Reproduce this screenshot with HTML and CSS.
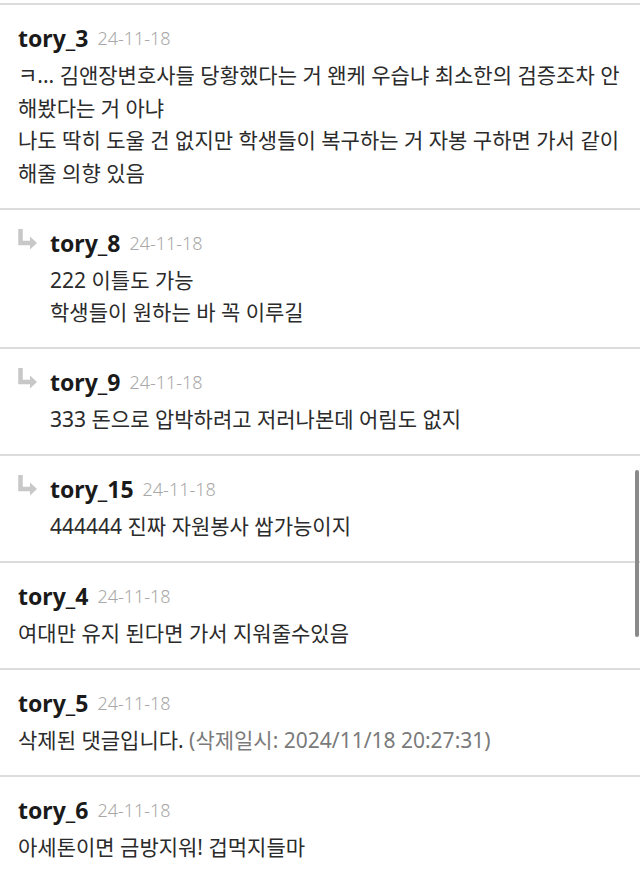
FILE: index.html
```html
<!DOCTYPE html>
<html lang="ko">
<head>
  <meta charset="UTF-8">
  <meta name="viewport" content="width=device-width, initial-scale=1.0">
  <link rel="stylesheet" href="styles.css">
  <title>댓글</title>
</head>
<body>
  <div class="comment-list">
    <div class="comment">
      <div class="comment-head">
        <span class="nick">tory_3</span>
        <span class="date">24-11-18</span>
      </div>
      <div class="comment-body">ㅋ... 김앤장변호사들 당황했다는 거 왠케 우습냐 최소한의 검증조차 안 해봤다는 거 아냐<br>나도 딱히 도울 건 없지만 학생들이 복구하는 거 자봉 구하면 가서 같이 해줄 의향 있음</div>
    </div>

    <div class="comment reply">
      <svg class="reply-icon" width="20" height="20" viewBox="0 0 20 20">
        <path d="M2.5 0 V14 H13" fill="none" stroke="#c8c8c8" stroke-width="4.5"/>
        <path d="M12 7.5 L19 14 L12 20.5 Z" fill="#c8c8c8"/>
      </svg>
      <div class="comment-main">
        <div class="comment-head">
          <span class="nick">tory_8</span>
          <span class="date">24-11-18</span>
        </div>
        <div class="comment-body">222 이틀도 가능<br>학생들이 원하는 바 꼭 이루길</div>
      </div>
    </div>

    <div class="comment reply">
      <svg class="reply-icon" width="20" height="20" viewBox="0 0 20 20">
        <path d="M2.5 0 V14 H13" fill="none" stroke="#c8c8c8" stroke-width="4.5"/>
        <path d="M12 7.5 L19 14 L12 20.5 Z" fill="#c8c8c8"/>
      </svg>
      <div class="comment-main">
        <div class="comment-head">
          <span class="nick">tory_9</span>
          <span class="date">24-11-18</span>
        </div>
        <div class="comment-body">333 돈으로 압박하려고 저러나본데 어림도 없지</div>
      </div>
    </div>

    <div class="comment reply">
      <svg class="reply-icon" width="20" height="20" viewBox="0 0 20 20">
        <path d="M2.5 0 V14 H13" fill="none" stroke="#c8c8c8" stroke-width="4.5"/>
        <path d="M12 7.5 L19 14 L12 20.5 Z" fill="#c8c8c8"/>
      </svg>
      <div class="comment-main">
        <div class="comment-head">
          <span class="nick">tory_15</span>
          <span class="date">24-11-18</span>
        </div>
        <div class="comment-body">444444 진짜 자원봉사 쌉가능이지</div>
      </div>
    </div>

    <div class="comment">
      <div class="comment-head">
        <span class="nick">tory_4</span>
        <span class="date">24-11-18</span>
      </div>
      <div class="comment-body">여대만 유지 된다면 가서 지워줄수있음</div>
    </div>

    <div class="comment">
      <div class="comment-head">
        <span class="nick">tory_5</span>
        <span class="date">24-11-18</span>
      </div>
      <div class="comment-body">삭제된 댓글입니다. <span class="deleted-at">(삭제일시: 2024/11/18 20:27:31)</span></div>
    </div>

    <div class="comment">
      <div class="comment-head">
        <span class="nick">tory_6</span>
        <span class="date">24-11-18</span>
      </div>
      <div class="comment-body">아세톤이면 금방지워! 겁먹지들마</div>
    </div>
  </div>

  <div class="scrollbar"></div>
</body>
</html>
```

FILE: styles.css
```css
body {
  margin: 0;
  padding: 0;
  background-color: #fff;
  font-family: "Noto Sans", "Noto Sans CJK KR", sans-serif;
  color: #2b2b2b;
  overflow: hidden;
}

.comment-list {
  padding-top: 3px;
}

.comment {
  border-top: 2px solid #dcdcdc;
  padding: 19px 10px 18.5px 18px;
}

.reply {
  display: flex;
  align-items: flex-start;
}

.reply-icon {
  flex-shrink: 0;
  margin-top: 0;
  margin-right: 12px;
}

.comment-main {
  flex: 1;
}

.comment-head {
  height: 28px;
  display: flex;
  align-items: center;
  gap: 9px;
}

.nick {
  font-weight: 700;
  font-size: 23px;
  color: #1a1a1a;
}

.date {
  font-weight: 300;
  font-size: 18px;
  color: #a8a8a8;
}

.comment-body {
  margin-top: 7px;
  font-size: 21px;
  line-height: 32.5px;
  word-break: keep-all;
}

.deleted-at {
  color: #7a7a7a;
}

.scrollbar {
  position: fixed;
  right: 1px;
  top: 470px;
  width: 4px;
  height: 167px;
  border-radius: 2px;
  background-color: #8a8a8a;
}
```
